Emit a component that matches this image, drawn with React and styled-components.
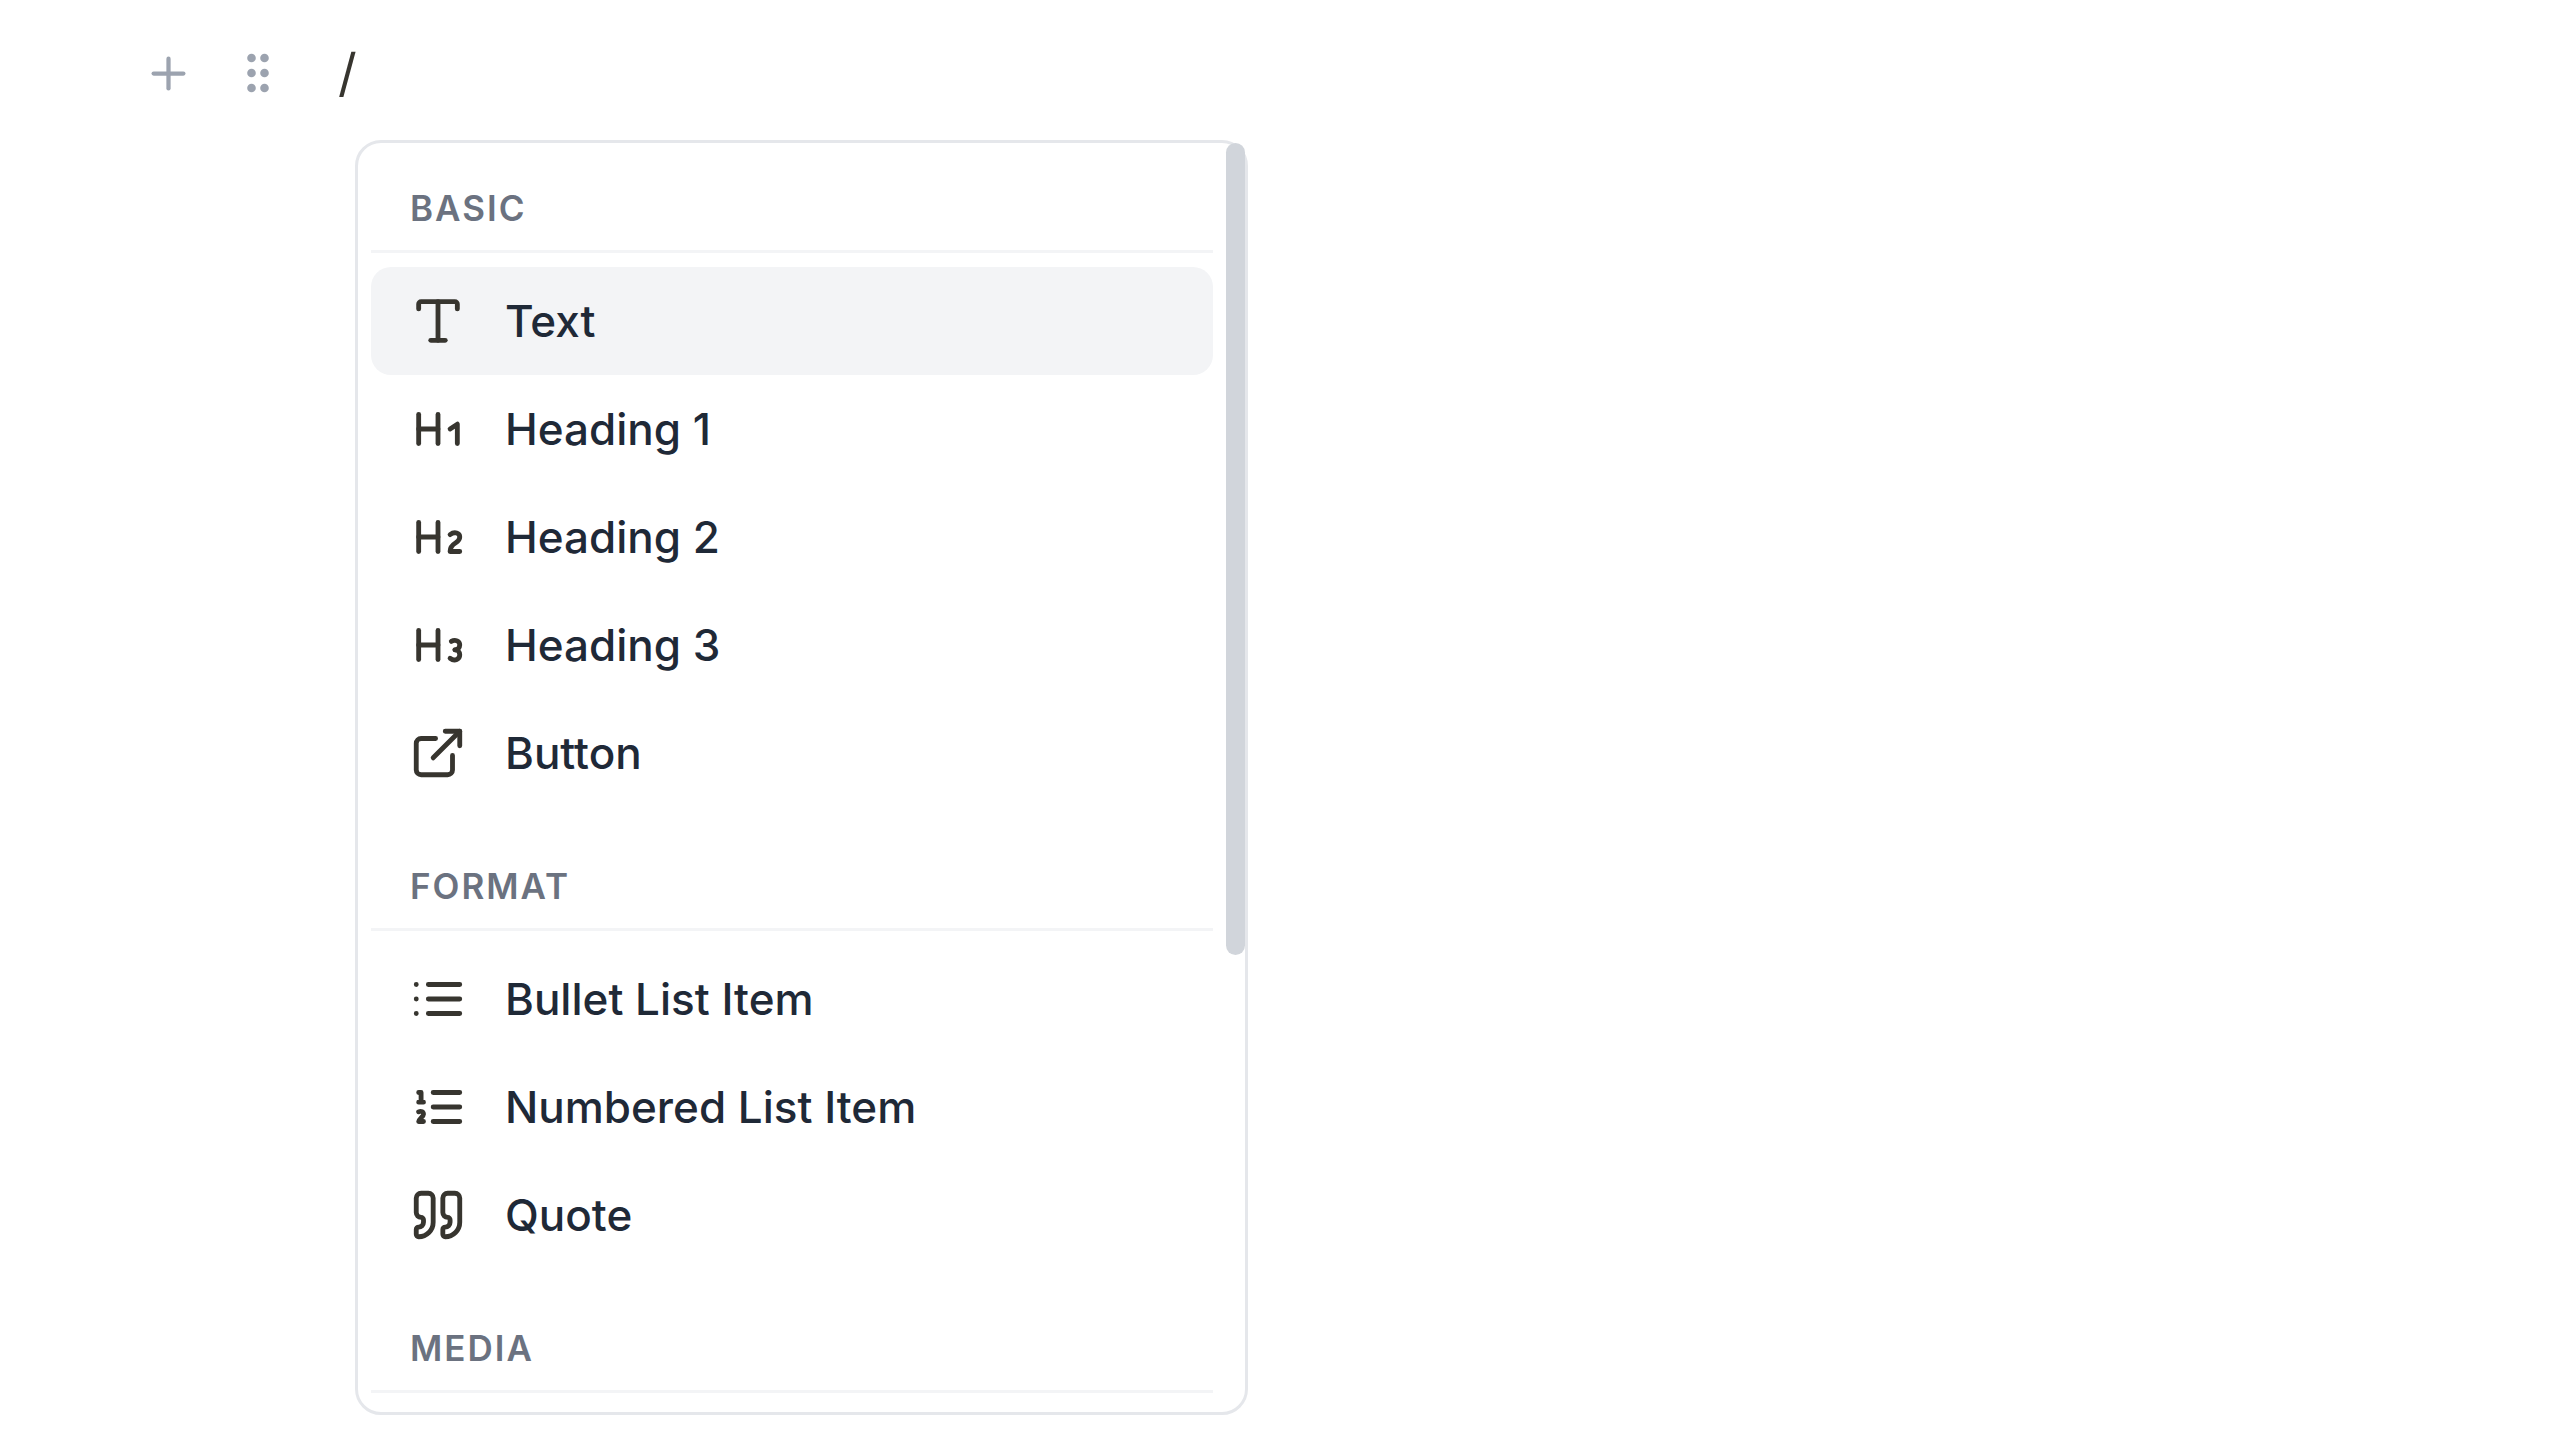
import React, { useState } from "react";
import styled, { createGlobalStyle } from "styled-components";
import {
  ExternalLink,
  Heading1,
  Heading2,
  Heading3,
  Plus,
  Quote,
  Type,
} from "lucide-react";

const GlobalStyle = createGlobalStyle`
  * {
    box-sizing: border-box;
  }

  body {
    margin: 0;
    background: #fff;
    font-family: Inter, "Liberation Sans", sans-serif;
  }

  button,
  input {
    font: inherit;
    border: none;
    background: none;
    padding: 0;
    margin: 0;
  }
`;

const Editor = styled.main`
  padding: 38px 140px 27px;
`;

const Block = styled.div`
  display: flex;
  align-items: center;
  height: 70px;
`;

const BlockButton = styled.button`
  display: flex;
  align-items: center;
  justify-content: center;
  width: 56px;
  height: 56px;
  margin-right: 34px;
  color: #9ca3af;
  cursor: pointer;
`;

const BlockInput = styled.input`
  flex: 1;
  min-width: 0;
  margin-left: 18px;
  font-size: 52px;
  line-height: 60px;
  color: #37352f;
  outline: none;
`;

const Menu = styled.div`
  display: flex;
  width: 893px;
  max-width: 100%;
  margin: 32px 0 0 215px;
  border: 3px solid #e5e7eb;
  border-radius: 26px;
`;

const MenuContent = styled.div`
  flex: 1;
  padding: 0 13px 19px;
`;

const Track = styled.div`
  width: 19px;
`;

const Thumb = styled.div`
  height: 64%;
  border-radius: 10px;
  background: #d1d5db;
`;

const Group = styled.section`
  & + & {
    margin-top: 14px;
  }
`;

const GroupTitle = styled.h2`
  margin: 0;
  padding: 39px 39px 16px;
  border-bottom: 3px solid #f3f4f6;
  font-size: 35px;
  font-weight: 600;
  line-height: 52px;
  letter-spacing: 2px;
  text-transform: uppercase;
  color: #6b7280;
`;

const Items = styled.div`
  padding-top: 14px;
`;

const Item = styled.button`
  display: flex;
  align-items: center;
  gap: 38px;
  width: 100%;
  height: 108px;
  padding: 0 38px;
  border-radius: 20px;
  background: ${(props) => (props.$active ? "#f3f4f6" : "transparent")};
  color: #37352f;
  cursor: pointer;
`;

const ItemLabel = styled.span`
  font-size: 44px;
  font-weight: 500;
  line-height: 64px;
  color: #1f2937;
`;

const DragHandle = () => (
  <svg width="30" height="44" viewBox="0 0 30 44" fill="currentColor">
    {[7, 22, 37].map((y) => (
      <g key={y}>
        <circle cx="8.5" cy={y} r="4.3" />
        <circle cx="21.5" cy={y} r="4.3" />
      </g>
    ))}
  </svg>
);

const ListIcon = ({ size, children }) => (
  <svg
    width={size}
    height={size}
    viewBox="0 0 24 24"
    fill="none"
    stroke="currentColor"
    strokeWidth="2"
    strokeLinecap="round"
    strokeLinejoin="round"
  >
    {children}
  </svg>
);

const BulletList = ({ size }) => (
  <ListIcon size={size}>
    <path d="M8 6h13M8 12h13M8 18h13M3 6h.01M3 12h.01M3 18h.01" />
  </ListIcon>
);

const NumberedList = ({ size }) => (
  <ListIcon size={size}>
    <path d="M10 6h11M10 12h11M10 18h11" />
    <path d="M4 6h1v4M4 10h2" />
    <path d="M6 18H4c0-1 2-2 2-3s-1-1.5-2-1" />
  </ListIcon>
);

const groups = [
  {
    title: "Basic",
    items: [
      { label: "Text", icon: Type },
      { label: "Heading 1", icon: Heading1 },
      { label: "Heading 2", icon: Heading2 },
      { label: "Heading 3", icon: Heading3 },
      { label: "Button", icon: ExternalLink },
    ],
  },
  {
    title: "Format",
    items: [
      { label: "Bullet List Item", icon: BulletList },
      { label: "Numbered List Item", icon: NumberedList },
      { label: "Quote", icon: Quote },
    ],
  },
  { title: "Media", items: [] },
];

const App = () => {
  const [active, setActive] = useState("Text");

  return (
    <>
      <GlobalStyle />
      <Editor>
        <Block>
          <BlockButton aria-label="Add block">
            <Plus size={51} />
          </BlockButton>
          <BlockButton aria-label="Drag block">
            <DragHandle />
          </BlockButton>
          <BlockInput aria-label="Block text" defaultValue="/" />
        </Block>
        <Menu>
          <MenuContent>
            {groups.map((group) => (
              <Group key={group.title}>
                <GroupTitle>{group.title}</GroupTitle>
                {group.items.length > 0 && (
                  <Items>
                    {group.items.map(({ label, icon: Icon }) => (
                      <Item
                        key={label}
                        $active={active === label}
                        onMouseEnter={() => setActive(label)}
                      >
                        <Icon size={58} />
                        <ItemLabel>{label}</ItemLabel>
                      </Item>
                    ))}
                  </Items>
                )}
              </Group>
            ))}
          </MenuContent>
          <Track>
            <Thumb />
          </Track>
        </Menu>
      </Editor>
    </>
  );
};

export default App;
